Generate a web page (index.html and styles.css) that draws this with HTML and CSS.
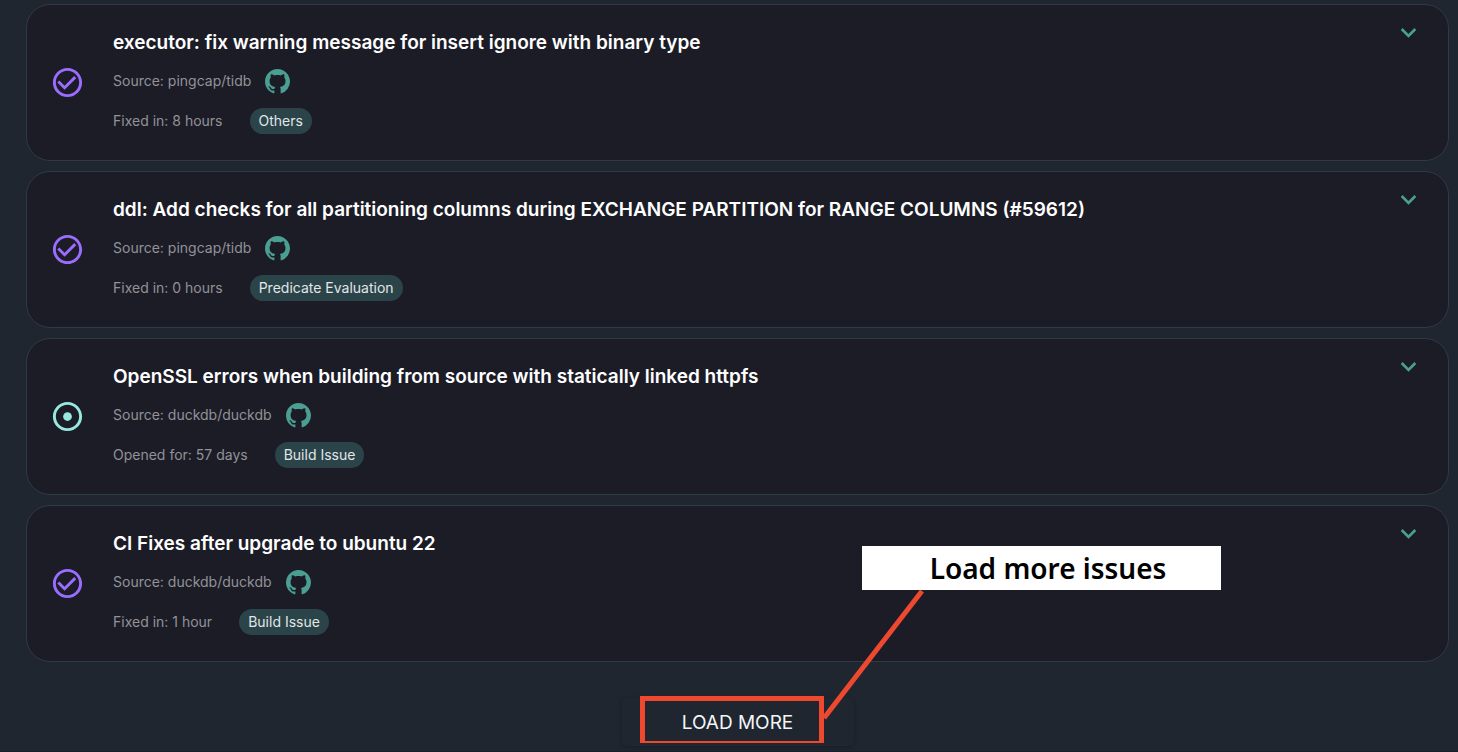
FILE: index.html
```html
<!DOCTYPE html>
<html lang="en">
<head>
<meta charset="utf-8">
<meta name="viewport" content="width=device-width, initial-scale=1">
<title>Issues</title>
<link rel="stylesheet" href="styles.css">
</head>
<body>
<svg class="sprite" aria-hidden="true">
  <symbol id="github" viewBox="0 0 16 16"><path d="M8 0C3.58 0 0 3.58 0 8c0 3.54 2.29 6.53 5.47 7.59.4.07.55-.17.55-.38 0-.19-.01-.82-.01-1.49-2.01.37-2.53-.49-2.69-.94-.09-.23-.48-.94-.82-1.13-.28-.15-.68-.52-.01-.53.63-.01 1.08.58 1.23.82.72 1.21 1.87.87 2.33.66.07-.52.28-.87.51-1.07-1.78-.2-3.64-.89-3.64-3.95 0-.87.31-1.59.82-2.15-.08-.2-.36-1.02.08-2.12 0 0 .67-.21 2.2.82.64-.18 1.32-.27 2-.27s1.36.09 2 .27c1.53-1.04 2.2-.82 2.2-.82.44 1.1.16 1.92.08 2.12.51.56.82 1.27.82 2.15 0 3.07-1.87 3.75-3.65 3.95.29.25.54.73.54 1.48 0 1.07-.01 1.93-.01 2.2 0 .21.15.46.55.38A8.01 8.01 0 0016 8c0-4.42-3.58-8-8-8z"/></symbol>
  <symbol id="closed" viewBox="0 0 24 24"><path d="M16.59 7.58 10 14.17l-3.59-3.58L5 12l5 5 8-8zM12 2C6.48 2 2 6.48 2 12s4.48 10 10 10 10-4.48 10-10S17.52 2 12 2m0 18c-4.42 0-8-3.58-8-8s3.58-8 8-8 8 3.58 8 8-3.58 8-8 8"/></symbol>
  <symbol id="open" viewBox="0 0 24 24"><circle cx="12" cy="12" r="3"/><path d="M12 2C6.48 2 2 6.48 2 12s4.48 10 10 10 10-4.48 10-10S17.52 2 12 2m0 18c-4.42 0-8-3.58-8-8s3.58-8 8-8 8 3.58 8 8-3.58 8-8 8"/></symbol>
  <symbol id="chevron" viewBox="0 0 24 24"><path d="M16.59 8.59 12 13.17 7.41 8.59 6 10l6 6 6-6z"/></symbol>
</svg>
<main class="page">
  <ul class="issues">
    <li class="issue">
      <svg class="status status-closed" role="img" aria-label="Closed"><use href="#closed"/></svg>
      <div class="details">
        <h2 class="title">executor: fix warning message for insert ignore with binary type</h2>
        <div class="source"><span>Source: pingcap/tidb</span><a class="repo" href="#" aria-label="pingcap/tidb on GitHub"><svg><use href="#github"/></svg></a></div>
        <div class="meta"><span>Fixed in: 8 hours</span><span class="tag">Others</span></div>
      </div>
      <button class="expand" type="button" aria-label="Expand"><svg><use href="#chevron"/></svg></button>
    </li>
    <li class="issue">
      <svg class="status status-closed" role="img" aria-label="Closed"><use href="#closed"/></svg>
      <div class="details">
        <h2 class="title">ddl: Add checks for all partitioning columns during EXCHANGE PARTITION for RANGE COLUMNS (#59612)</h2>
        <div class="source"><span>Source: pingcap/tidb</span><a class="repo" href="#" aria-label="pingcap/tidb on GitHub"><svg><use href="#github"/></svg></a></div>
        <div class="meta"><span>Fixed in: 0 hours</span><span class="tag">Predicate Evaluation</span></div>
      </div>
      <button class="expand" type="button" aria-label="Expand"><svg><use href="#chevron"/></svg></button>
    </li>
    <li class="issue">
      <svg class="status status-open" role="img" aria-label="Open"><use href="#open"/></svg>
      <div class="details">
        <h2 class="title">OpenSSL errors when building from source with statically linked httpfs</h2>
        <div class="source"><span>Source: duckdb/duckdb</span><a class="repo" href="#" aria-label="duckdb/duckdb on GitHub"><svg><use href="#github"/></svg></a></div>
        <div class="meta"><span>Opened for: 57 days</span><span class="tag">Build Issue</span></div>
      </div>
      <button class="expand" type="button" aria-label="Expand"><svg><use href="#chevron"/></svg></button>
    </li>
    <li class="issue">
      <svg class="status status-closed" role="img" aria-label="Closed"><use href="#closed"/></svg>
      <div class="details">
        <h2 class="title">CI Fixes after upgrade to ubuntu 22</h2>
        <div class="source"><span>Source: duckdb/duckdb</span><a class="repo" href="#" aria-label="duckdb/duckdb on GitHub"><svg><use href="#github"/></svg></a></div>
        <div class="meta"><span>Fixed in: 1 hour</span><span class="tag">Build Issue</span></div>
      </div>
      <button class="expand" type="button" aria-label="Expand"><svg><use href="#chevron"/></svg></button>
    </li>
  </ul>
  <div class="more">
    <button class="load-more" type="button">LOAD MORE</button>
    <div class="highlight"></div>
    <svg class="pointer" viewBox="0 0 104 132" aria-hidden="true"><path d="M101 2 3 129"/></svg>
    <div class="callout">Load more issues</div>
  </div>
</main>
</body>
</html>
```
FILE: styles.css
```css
* {
  box-sizing: border-box;
}

body {
  margin: 0;
  background: #1f2630;
  color: #fff;
  font-family: Inter, "Liberation Sans", sans-serif;
  font-size: 14px;
}

.sprite {
  position: absolute;
  width: 0;
  height: 0;
}

svg {
  display: block;
  fill: currentColor;
}

.page {
  padding: 4px 9px 5px 26px;
  border-bottom: 1px solid #1b1e29;
}

.issues {
  display: flex;
  flex-direction: column;
  gap: 10px;
  margin: 0;
  padding: 0;
  list-style: none;
}

.issue {
  display: flex;
  align-items: center;
  padding: 25px 24px 26px 23px;
  background: #1c1c27;
  border: 1px solid #303945;
  border-radius: 24px;
}

.status {
  flex: none;
  width: 35px;
  height: 35px;
}

.status-closed {
  color: #9b6dff;
}

.status-open {
  color: #98e8e0;
}

.details {
  flex: 1;
  min-width: 0;
  margin-left: 28px;
}

.title {
  margin: 0;
  font-size: 19px;
  font-weight: 600;
  line-height: 25px;
}

.source,
.meta {
  display: flex;
  align-items: center;
  color: #929297;
  line-height: 26px;
}

.source {
  gap: 14px;
  margin-top: 13px;
}

.meta {
  gap: 27px;
  margin-top: 14px;
}

.repo {
  color: #4b9e92;
}

.repo svg {
  width: 25px;
  height: 25px;
}

.tag {
  padding: 0 9px;
  border-radius: 13px;
  background: #2a444a;
  color: #e1e6e7;
}

.expand {
  align-self: flex-start;
  margin-top: -13px;
  padding: 0;
  border: 0;
  background: none;
  color: #4b9e92;
  cursor: pointer;
}

.expand svg {
  width: 31px;
  height: 31px;
}

.more {
  position: relative;
  width: 232px;
  margin: 36px auto 0;
}

.load-more {
  display: block;
  width: 100%;
  height: 48px;
  padding: 2px 0 0;
  border: 0;
  border-radius: 5px;
  background: #1f2630;
  box-shadow: 0 1px 4px rgba(0, 0, 0, 0.25);
  color: #f4f5f6;
  font: 400 19px/46px Inter, "Liberation Sans", sans-serif;
  cursor: pointer;
}

.highlight {
  position: absolute;
  top: -2px;
  left: 18px;
  width: 184px;
  height: 47px;
  border: 5px solid #ee492e;
  border-bottom-width: 2px;
  pointer-events: none;
}

.pointer {
  position: absolute;
  bottom: 25px;
  left: 199px;
  width: 104px;
  height: 132px;
  fill: none;
  stroke: #ee492e;
  stroke-width: 5;
  pointer-events: none;
}

.callout {
  position: absolute;
  bottom: 156px;
  left: 240px;
  width: 359px;
  padding-left: 14px;
  background: #fff;
  color: #000;
  font: 600 28px/44px "Noto Sans", sans-serif;
  text-align: center;
}
```
